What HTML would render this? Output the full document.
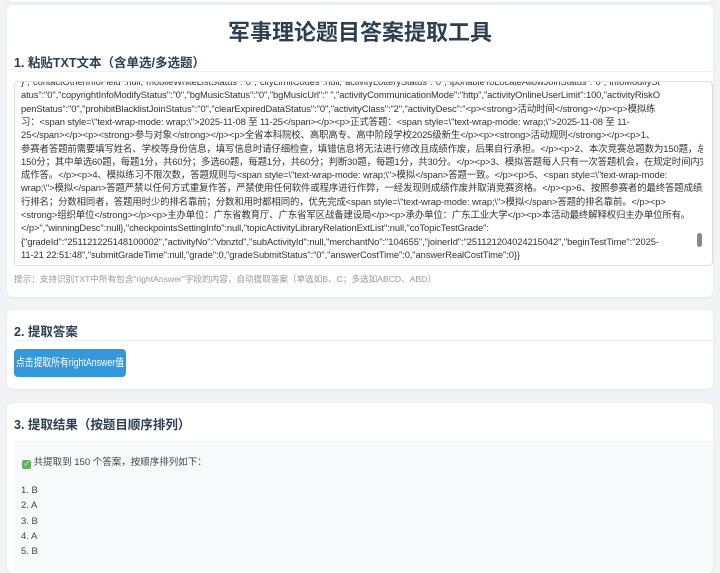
<!DOCTYPE html>
<html><head><meta charset="utf-8"><style>
*{box-sizing:border-box;margin:0;padding:0}
body{width:720px;height:561px;overflow:hidden;background:#f1f3f6;font-family:"Liberation Sans","Noto Sans CJK SC",sans-serif;color:#333;position:relative}
.card{position:absolute;left:7px;width:706px;background:#fff;border-radius:6px;box-shadow:0 1px 3px rgba(0,0,0,.06)}
h1{position:absolute;top:15px;left:0;width:100%;text-align:center;font-size:22px;font-weight:bold;color:#2c3e50}
h2{position:absolute;left:14px;font-size:12.5px;font-weight:bold;color:#2c3e50}
.hr{position:absolute;left:14px;right:7px;height:1px;background:#eef0f2}
.ta{position:absolute;left:14px;top:81px;width:699px;height:185px;border:1px solid #dcdfe3;border-radius:4px;overflow:hidden;font-size:9.4px;color:#333}
.clip{position:absolute;left:0;top:0;width:688px;height:183px;overflow:hidden}
.ta .clip div{position:absolute;left:6px;white-space:nowrap;line-height:13.3px;letter-spacing:-0.1px}
.hint{position:absolute;left:14px;top:273px;font-size:8.6px;color:#999}
.btn{position:absolute;left:14px;top:349px;width:112px;height:28px;background:#3498db;border-radius:4px;color:#fff;font-size:11px;line-height:28px;white-space:nowrap}
.btn span{position:absolute;left:50%;top:0;transform:translateX(-50%) scaleX(0.8)}
.res{position:absolute;left:14px;top:441px;width:699px;height:130px;background:#f8f9fa;border-radius:4px;font-size:9.5px;color:#444}
</style></head><body>
<div class="card" style="top:-10px;height:12px"></div>
<div class="card" style="top:5px;height:292px"></div>
<h1>军事理论题目答案提取工具</h1>
<h2 style="top:52px">1. 粘贴TXT文本（含单选/多选题）</h2>
<div class="hr" style="top:71px"></div>
<div class="ta"><div class="clip">
<div style="top:-7px">}&quot;,&quot;contactOtherInfoField&quot;:null,&quot;mobileWhiteListStatus&quot;:&quot;0&quot;,&quot;cityLimitCodes&quot;:null,&quot;activityLotteryStatus&quot;:&quot;0&quot;,&quot;iponableToLocateAllowJoinStatus&quot;:&quot;0&quot;,&quot;infoModifySt</div>
<div style="top:6.3px">atus&quot;:&quot;0&quot;,&quot;copyrightInfoModifyStatus&quot;:&quot;0&quot;,&quot;bgMusicStatus&quot;:&quot;0&quot;,&quot;bgMusicUrl&quot;:&quot; &quot;,&quot;activityCommunicationMode&quot;:&quot;http&quot;,&quot;activityOnlineUserLimit&quot;:100,&quot;activityRiskO</div>
<div style="top:19.6px">penStatus&quot;:&quot;0&quot;,&quot;prohibitBlacklistJoinStatus&quot;:&quot;0&quot;,&quot;clearExpiredDataStatus&quot;:&quot;0&quot;,&quot;activityClass&quot;:&quot;2&quot;,&quot;activityDesc&quot;:&quot;&lt;p&gt;&lt;strong&gt;活动时间&lt;/strong&gt;&lt;/p&gt;&lt;p&gt;模拟练</div>
<div style="top:32.9px">习：&lt;span style=\&quot;text-wrap-mode: wrap;\&quot;&gt;2025-11-08 至 11-25&lt;/span&gt;&lt;/p&gt;&lt;p&gt;正式答题：&lt;span style=\&quot;text-wrap-mode: wrap;\&quot;&gt;2025-11-08 至 11-</div>
<div style="top:46.2px">25&lt;/span&gt;&lt;/p&gt;&lt;p&gt;&lt;strong&gt;参与对象&lt;/strong&gt;&lt;/p&gt;&lt;p&gt;全省本科院校、高职高专、高中阶段学校2025级新生&lt;/p&gt;&lt;p&gt;&lt;strong&gt;活动规则&lt;/strong&gt;&lt;/p&gt;&lt;p&gt;1、</div>
<div style="top:59.5px">参赛者答题前需要填写姓名、学校等身份信息，填写信息时请仔细检查，填错信息将无法进行修改且成绩作废，后果自行承担。&lt;/p&gt;&lt;p&gt;2、本次竞赛总题数为150题，总分</div>
<div style="top:72.8px">150分；其中单选60题，每题1分，共60分；多选60题，每题1分，共60分；判断30题，每题1分，共30分。&lt;/p&gt;&lt;p&gt;3、模拟答题每人只有一次答题机会，在规定时间内完</div>
<div style="top:86.1px">成作答。&lt;/p&gt;&lt;p&gt;4、模拟练习不限次数，答题规则与&lt;span style=\&quot;text-wrap-mode: wrap;\&quot;&gt;模拟&lt;/span&gt;答题一致。&lt;/p&gt;&lt;p&gt;5、&lt;span style=\&quot;text-wrap-mode:</div>
<div style="top:99.4px">wrap;\&quot;&gt;模拟&lt;/span&gt;答题严禁以任何方式重复作答，严禁使用任何软件或程序进行作弊，一经发现则成绩作废并取消竞赛资格。&lt;/p&gt;&lt;p&gt;6、按照参赛者的最终答题成绩进</div>
<div style="top:112.7px">行排名；分数相同者，答题用时少的排名靠前；分数和用时都相同的，优先完成&lt;span style=\&quot;text-wrap-mode: wrap;\&quot;&gt;模拟&lt;/span&gt;答题的排名靠前。&lt;/p&gt;&lt;p&gt;</div>
<div style="top:126px">&lt;strong&gt;组织单位&lt;/strong&gt;&lt;/p&gt;&lt;p&gt;主办单位：广东省教育厅、广东省军区战备建设局&lt;/p&gt;&lt;p&gt;承办单位：广东工业大学&lt;/p&gt;&lt;p&gt;本活动最终解释权归主办单位所有。</div>
<div style="top:139.3px">&lt;/p&gt;&quot;,&quot;winningDesc&quot;:null},&quot;checkpointsSettingInfo&quot;:null,&quot;topicActivityLibraryRelationExtList&quot;:null,&quot;coTopicTestGrade&quot;:</div>
<div style="top:152.6px">{&quot;gradeId&quot;:&quot;251121225148100002&quot;,&quot;activityNo&quot;:&quot;vbnztd&quot;,&quot;subActivityId&quot;:null,&quot;merchantNo&quot;:&quot;104655&quot;,&quot;joinerId&quot;:&quot;251121204024215042&quot;,&quot;beginTestTime&quot;:&quot;2025-</div>
<div style="top:165.9px">11-21 22:51:48&quot;,&quot;submitGradeTime&quot;:null,&quot;grade&quot;:0,&quot;gradeSubmitStatus&quot;:&quot;0&quot;,&quot;answerCostTime&quot;:0,&quot;answerRealCostTime&quot;:0}}</div>
</div></div>
<div style="position:absolute;left:697px;top:233px;width:5px;height:14px;background:#888;border-radius:3px"></div>
<div class="hint">提示：支持识别TXT中所有包含"rightAnswer"字段的内容，自动提取答案（单选如B、C；多选如ABCD、ABD）</div>

<div class="card" style="top:310px;height:79px"></div>
<h2 style="top:321px">2. 提取答案</h2>
<div class="hr" style="top:340px"></div>
<div class="btn"><span>点击提取所有rightAnswer值</span></div>

<div class="card" style="top:403px;height:170px"></div>
<h2 style="top:414px">3. 提取结果（按题目顺序排列）</h2>
<div class="res">
<div style="position:absolute;left:8px;top:13px"><span style="display:inline-block;width:9px;height:9px;background:#5cb85c;border-radius:2px;color:#fff;font-size:7px;text-align:center;line-height:9px;vertical-align:-1px">✓</span> 共提取到 150 个答案，按顺序排列如下：</div>
<div style="position:absolute;left:7px;top:42px;line-height:15.3px">1. B<br>2. A<br>3. B<br>4. A<br>5. B</div>
</div>
</body></html>
